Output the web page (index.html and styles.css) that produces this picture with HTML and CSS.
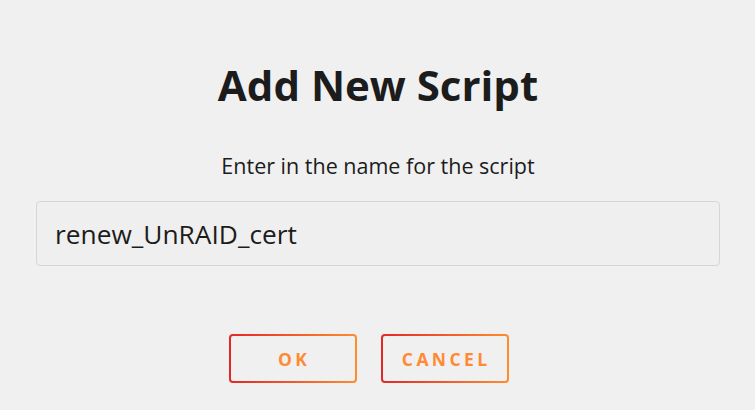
FILE: index.html
```html
<!DOCTYPE html>
<html lang="en">

<head>
    <meta charset="UTF-8">
    <title>Add New Script</title>
    <link rel="stylesheet" href="styles.css">
</head>

<body>
    <div class="dialog">
        <h2 class="dialog-title">Add New Script</h2>
        <p class="dialog-text">Enter in the name for the script</p>
        <input class="dialog-input" type="text" value="renew_UnRAID_cert">
        <div class="dialog-actions">
            <button class="btn">OK</button>
            <button class="btn">CANCEL</button>
        </div>
    </div>
</body>

</html>
```

FILE: styles.css
```css
body {
    font-family: "Open Sans", "Noto Sans", sans-serif;
    background-color: #f0f0f0;
    margin: 0;
    color: #1c1c1c;
}

.dialog {
    width: 755px;
    height: 410px;
    padding: 0 35px 0 36px;
    box-sizing: border-box;
    display: flex;
    flex-direction: column;
    align-items: center;
}

.dialog-title {
    margin: 55px 0 0;
    font-size: 42px;
    font-weight: 700;
    line-height: 60px;
}

.dialog-text {
    margin: 36px 0 0;
    font-size: 21.5px;
    line-height: 30px;
}

.dialog-input {
    margin-top: 20px;
    width: 100%;
    height: 65px;
    box-sizing: border-box;
    padding: 0 18px;
    font-family: inherit;
    font-size: 26.3px;
    color: #1c1c1c;
    background: #efefef;
    border: 1px solid #d6d6d6;
    border-radius: 4px;
}

.dialog-actions {
    margin: 68px 19px 0 0;
    display: flex;
    gap: 24px;
}

.btn {
    width: 128px;
    height: 49px;
    padding: 0;
    font-family: inherit;
    font-size: 17.5px;
    font-weight: 700;
    letter-spacing: 3.4px;
    text-indent: 3.4px;
    color: #ff8a35;
    background:
        linear-gradient(#f0f0f0, #f0f0f0) padding-box,
        linear-gradient(90deg, #e22828, #ff8c2f) border-box;
    border: 2px solid transparent;
    border-radius: 4px;
}
```
